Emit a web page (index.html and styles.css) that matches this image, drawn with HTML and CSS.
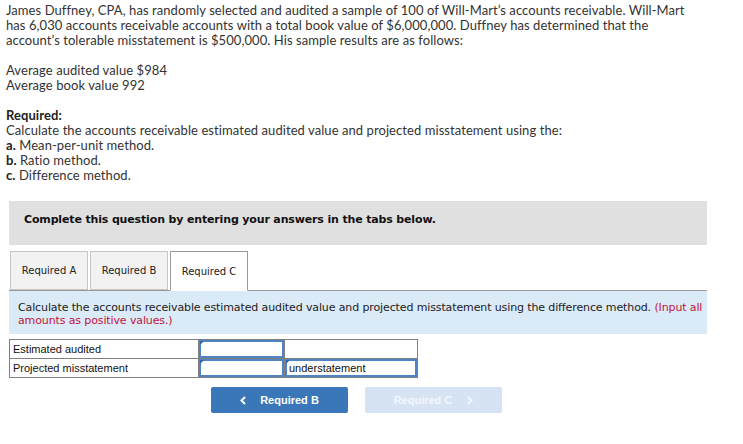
FILE: index.html
```html
<!DOCTYPE html>
<html>
<head>
<meta charset="utf-8">
<link rel="stylesheet" href="styles.css">
</head>
<body>
<div class="page">
  <div class="question">
    <p>James Duffney, CPA, has randomly selected and audited a sample of 100 of Will-Mart’s accounts receivable. Will-Mart<br>has 6,030 accounts receivable accounts with a total book value of $6,000,000. Duffney has determined that the<br>account’s tolerable misstatement is $500,000. His sample results are as follows:</p>
    <p>Average audited value $984<br>Average book value 992</p>
    <p><b>Required:</b><br>Calculate the accounts receivable estimated audited value and projected misstatement using the:<br><b>a.</b> Mean-per-unit method.<br><b>b.</b> Ratio method.<br><b>c.</b> Difference method.</p>
  </div>

  <div class="work">
    <div class="banner">Complete this question by entering your answers in the tabs below.</div>

    <div class="tabs">
      <div class="tab">Required A</div>
      <div class="tab">Required B</div>
      <div class="tab active">Required C</div>
    </div>

    <div class="instructions">Calculate the accounts receivable estimated audited value and projected misstatement using the difference method. <span class="hint">(Input all<br>amounts as positive values.)</span></div>

    <table class="answers">
      <tr>
        <td class="label">Estimated audited</td>
        <td class="entry"><div class="field"></div></td>
        <td class="plain"></td>
      </tr>
      <tr>
        <td class="label">Projected misstatement</td>
        <td class="entry"><div class="field"></div></td>
        <td class="entry wide"><div class="field">understatement</div></td>
      </tr>
    </table>

    <div class="nav">
      <button class="btn prev"><svg class="chev" width="6" height="9" viewBox="0 0 6 9"><polyline points="5,1 1.5,4.5 5,8" fill="none" stroke="currentColor" stroke-width="2"/></svg>Required B</button>
      <button class="btn next" disabled>Required C<svg class="chev" width="6" height="9" viewBox="0 0 6 9"><polyline points="1,1 4.5,4.5 1,8" fill="none" stroke="currentColor" stroke-width="2"/></svg></button>
    </div>
  </div>
</div>
</body>
</html>
```

FILE: styles.css
```css
html, body {
  margin: 0;
  padding: 0;
  background: #fff;
}

.page {
  padding: 3px 6px 0 6px;
}

.question {
  font-family: Lato, "Open Sans", sans-serif;
  font-size: 13px;
  line-height: 15px;
  letter-spacing: 0.07px;
  color: #333;
}

.question p {
  margin: 0 0 15px 0;
  white-space: nowrap;
}

.question p:last-child {
  margin-bottom: 0;
}

.question b {
  font-weight: 700;
  color: #222;
}

.work {
  margin: 18px 0 0 3px;
  width: 698px;
}

.banner {
  background: #e0e0e0;
  font-family: "DejaVu Sans", Verdana, sans-serif;
  font-weight: bold;
  font-size: 11px;
  line-height: 13px;
  letter-spacing: -0.15px;
  color: #111;
  padding: 12px 15px 19px 15px;
}

.tabs {
  display: flex;
  gap: 2px;
  margin-top: 6px;
  padding-left: 1px;
  border-bottom: 1px solid #999;
  height: 39px;
}

.tab {
  box-sizing: border-box;
  width: 78px;
  height: 39px;
  background: #f2f2f2;
  border: 1px solid #c6c6c6;
  font-family: "DejaVu Sans", Verdana, sans-serif;
  font-size: 10px;
  color: #222;
  display: flex;
  align-items: center;
  justify-content: center;
}

.tab.active {
  background: #fff;
  border-color: #999;
  border-bottom-color: #fff;
  height: 40px;
}

.instructions {
  background: #dbeaf7;
  font-family: "DejaVu Sans", Verdana, sans-serif;
  font-size: 11px;
  line-height: 13px;
  letter-spacing: -0.12px;
  white-space: nowrap;
  color: #222;
  padding: 10px 0 7px 9px;
}

.hint {
  color: #c0143c;
}

.answers {
  margin-top: 5px;
  border-collapse: collapse;
  font-family: "Liberation Sans", Arial, sans-serif;
  font-size: 11px;
  color: #111;
}

.answers td {
  border: 1px solid #808080;
  padding: 0;
  height: 18px;
}

.answers td.label {
  width: 185px;
  padding-left: 3px;
}

.answers td.entry {
  width: 85px;
}

.answers td.plain,
.answers td.wide {
  width: 132px;
}

.field {
  position: relative;
  box-sizing: border-box;
  height: 18px;
  border: 2px solid #4f83c2;
  padding-left: 2px;
  line-height: 14px;
  color: #111;
}

.field::before {
  content: "";
  position: absolute;
  left: -1px;
  top: -1px;
  border-style: solid;
  border-width: 4px 4px 0 0;
  border-color: #2f64ad transparent transparent transparent;
}

.nav {
  display: flex;
  justify-content: center;
  gap: 17px;
  margin-top: 9px;
  padding-right: 3px;
}

.btn {
  width: 137px;
  height: 26px;
  border: none;
  border-radius: 2px;
  font-family: "Liberation Sans", Arial, sans-serif;
  font-weight: bold;
  font-size: 11px;
  color: #fff;
  display: flex;
  align-items: center;
  justify-content: center;
  padding: 0;
}

.btn.prev {
  background: #3a77b9;
}

.btn.next {
  background: #d6e3f2;
  color: #f4f7fb;
}

.chev {
  display: block;
}

.prev .chev {
  margin-right: 14px;
}

.next .chev {
  margin-left: 15px;
}
```
